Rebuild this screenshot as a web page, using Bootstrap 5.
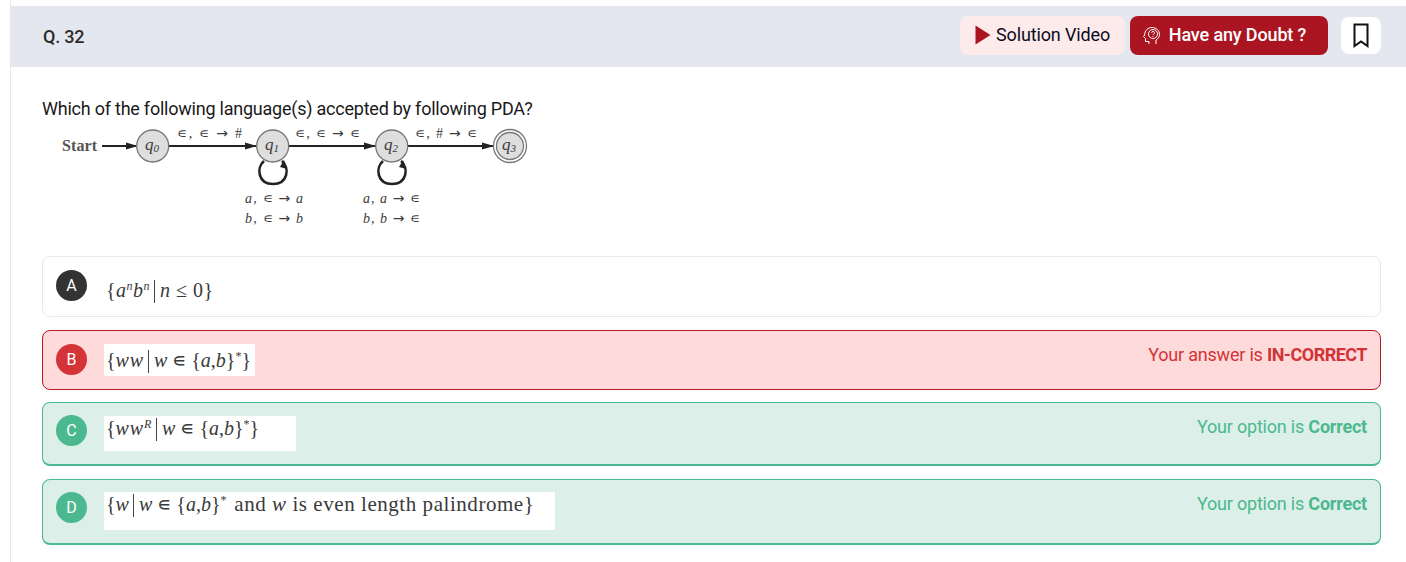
<!DOCTYPE html>
<html lang="en"><head><meta charset="utf-8">
<link href="https://cdn.jsdelivr.net/npm/bootstrap@5.3.0/dist/css/bootstrap.min.css" rel="stylesheet">
<style>
html,body{height:562px;overflow:hidden;background:#fff}
body{font-family:Roboto,"Liberation Sans",sans-serif;color:#111;font-size:16px}
.shell{margin-left:10px;padding-top:6px;border-left:1px solid #e6e8f0;height:562px}
.qbar{height:61px;background:#e4e7f0;padding:10px 25px 12px 32px}
.qno{font-weight:500;font-size:18px;letter-spacing:-.2px;color:#2b2b2b;margin-top:2px}
.btn-sol,.btn-doubt{height:39px;border-radius:8px;font-size:18px;letter-spacing:-.14px;border:0;padding:0 0 1px;line-height:1}
.btn-sol{width:165px;background:#fcebea;color:#0c0c1e;font-weight:400;gap:5px}
.btn-doubt{width:198px;margin-left:5px;padding-right:10px;background:#ab1522;color:#fff;font-weight:500;gap:8px}
.btn-mark{width:40px;height:37px;margin-left:13px;background:#fff;border-radius:8px}
.qbody{padding:31px 25px 0 31px}
.qtext{font-size:18px;letter-spacing:-.23px;line-height:22px;margin:0;color:#1a1a1a}
.pda{display:block;width:500px;height:119px;margin-bottom:17px}
.pda text{font-family:"Liberation Serif",serif;fill:#3c3c3c;font-size:17px}
.pda .lbl{font-size:14px}
.pda .it{font-style:italic}
.pda .st{font-size:16px;font-weight:700;fill:#555}
.pda .arw{font-family:"DejaVu Sans",sans-serif;font-style:normal}
.opt{border:1px solid #e9e9e9;border-radius:8px;position:relative;padding-left:13px;padding-right:13px}
.opt-a{height:61px;margin-bottom:13px;background:#fff}
.opt-b{height:60px;margin-bottom:12px;background:#ffdada;border-color:#b9172a}
.opt-c{height:64px;margin-bottom:13px}
.opt-d{height:66px}
.opt-c,.opt-d{background:#dcf0e9;border-color:#4cb88f;border-bottom-width:2px}
.mark-dot{width:31px;height:31px;border-radius:50%;color:#fff;font-size:16px;flex:none;line-height:1}
.dot-a{background:#333;margin-top:13px}
.dot-b{background:#d43338;margin-top:13px}
.dot-c,.dot-d{background:#4cb88f;margin-top:12px}
.mth{font-family:"Liberation Serif",serif;color:#3a3a3a;font-size:20px;line-height:24px;margin-left:17px;padding-left:2px;white-space:nowrap}
.mth i{font-style:italic}
.mth sup{font-size:12px;top:-.55em}
.bar{display:inline-block;width:1px;height:23px;background:#444;vertical-align:-6px;margin:0 5px 0 4px}
.set-gap{margin-left:5px}
.wide-w{letter-spacing:.8px}
.img-b{width:151px;height:32px;margin-top:13px;padding-top:4px;background:#fff}
.img-c{width:192px;height:35px;margin-top:13px;background:#fff}
.img-d{width:451px;height:38px;margin-top:12px;background:#fff}
.prose{font-size:21px;letter-spacing:.55px;margin-left:2px}
.opt-a .mth{margin-top:21px;letter-spacing:.5px}
.verdict{font-size:18px;letter-spacing:-.21px;line-height:22px;margin-left:auto;margin-top:13px;white-space:nowrap}
.verdict b{font-weight:700}
.v-bad b{letter-spacing:-.5px}
.v-bad{color:#d13438}
.v-ok{color:#4cb88f}
</style></head><body>
<div class="shell">
 <div class="qbar d-flex align-items-center">
  <div class="qno">Q. 32</div>
  <button class="btn btn-sol d-flex align-items-center justify-content-center ms-auto" type="button">
   <svg width="16" height="20" viewBox="0 0 16 20"><path d="M0.500 0.500 L15.500 10 L0.500 19.500 Z" fill="#ab1522"/></svg>Solution Video</button>
  <button class="btn btn-doubt d-flex align-items-center justify-content-center" type="button">
   <svg width="19" height="19" viewBox="0 0 19 19" fill="none" stroke="#fff" stroke-width="1"><path d="M7 18v-2.500H3.500V12.500L1.500 10.500l1.200-1.500C2.500 4.500 6 1.500 10 1.500c4 0 7.500 3 7.500 6.800 0 2.800-1.700 4.700-3.500 5.700V18"/><circle cx="11" cy="8" r="4.500"/><path d="M9.700 6.800a1.400 1.400 0 1 1 2 1.300c-.5.300-.7.600-.7 1.100M11 10.200v.7"/></svg>Have any Doubt ?</button>
  <div class="btn-mark d-flex align-items-center justify-content-center">
   <svg width="16" height="25" viewBox="0 0 16 25" fill="none" stroke="#111" stroke-width="2"><path d="M1.500 1.500h13v21.500L8 18.500 1.500 23Z"/></svg></div>
 </div>
 <div class="qbody">
  <p class="qtext">Which of the following language(s) accepted by following PDA?</p>
  <svg class="pda" viewBox="0 0 500 119">
   <g fill="none" stroke="#222" stroke-width="2">
    <path d="M60 26H95M127 26H215M247 26H334M366 26H452"/>
    <path d="M222 41C214 48 216 64 231 64C246 64 248 48 240 41" stroke-width="2.600"/>
    <path d="M341 41C333 48 335 64 350 64C365 64 367 48 359 41" stroke-width="2.600"/>
   </g>
   <g fill="#222">
    <path d="M84 22.500L96 26L84 29.500ZM203 22.500L215 26L203 29.500ZM322 22.500L334 26L322 29.500ZM440 22.500L452 26L440 29.500Z"/>
    <path d="M242 40L245 49L238 47ZM361 40L364 49L357 47Z"/>
   </g>
   <g fill="#dedede" stroke="#777" stroke-width="1.300">
    <circle cx="110.700" cy="26" r="16"/><circle cx="230.700" cy="26" r="16"/><circle cx="349.700" cy="26" r="16"/>
    <circle cx="468" cy="26" r="16.500" fill="#fff"/><circle cx="468" cy="26" r="13.500"/>
   </g>
   <text class="st" x="20" y="31" textLength="35">Start</text>
   <text class="it" x="103" y="30">q<tspan font-size="11" dy="2">0</tspan></text>
   <text class="it" x="223" y="30">q<tspan font-size="11" dy="2">1</tspan></text>
   <text class="it" x="342" y="30">q<tspan font-size="11" dy="2">2</tspan></text>
   <text class="it" x="460" y="30">q<tspan font-size="11" dy="2">3</tspan></text>
   <text class="lbl" x="135" y="18" textLength="65">∊, ∊ <tspan class="arw">→</tspan> #</text>
   <text class="lbl" x="253" y="18" textLength="65">∊, ∊ <tspan class="arw">→</tspan> ∊</text>
   <text class="lbl" x="373" y="18" textLength="62">∊, # <tspan class="arw">→</tspan> ∊</text>
   <text class="lbl it" x="203" y="83" textLength="58">a, <tspan font-style="normal">∊ </tspan><tspan class="arw">→</tspan> a</text>
   <text class="lbl it" x="203" y="103" textLength="58">b, <tspan font-style="normal">∊ </tspan><tspan class="arw">→</tspan> b</text>
   <text class="lbl it" x="321" y="83" textLength="57">a, a <tspan class="arw">→</tspan><tspan font-style="normal"> ∊</tspan></text>
   <text class="lbl it" x="321" y="103" textLength="57">b, b <tspan class="arw">→</tspan><tspan font-style="normal"> ∊</tspan></text>
  </svg>
  <div class="opt opt-a d-flex align-items-start">
   <div class="mark-dot dot-a d-flex align-items-center justify-content-center">A</div>
   <div class="mth">{<i>a<sup>n</sup>b<sup>n</sup></i><span class="bar"></span><i>n</i> ≤ 0}</div>
  </div>
  <div class="opt opt-b d-flex align-items-start">
   <div class="mark-dot dot-b d-flex align-items-center justify-content-center">B</div>
   <div class="mth img-b">{<i class="wide-w">ww</i><span class="bar"></span><i>w</i> ∊<span class="set-gap">{<i>a</i>,<i>b</i>}<sup>*</sup>}</span></div>
   <div class="verdict v-bad">Your answer is <b>IN-CORRECT</b></div>
  </div>
  <div class="opt opt-c d-flex align-items-start">
   <div class="mark-dot dot-c d-flex align-items-center justify-content-center">C</div>
   <div class="mth img-c">{<i class="wide-w">ww<sup>R</sup></i><span class="bar"></span><i>w</i> ∊<span class="set-gap">{<i>a</i>,<i>b</i>}<sup>*</sup>}</span></div>
   <div class="verdict v-ok">Your option is <b>Correct</b></div>
  </div>
  <div class="opt opt-d d-flex align-items-start">
   <div class="mark-dot dot-d d-flex align-items-center justify-content-center">D</div>
   <div class="mth img-d">{<i>w</i><span class="bar"></span><i>w</i> ∊<span class="set-gap">{<i>a</i>,<i>b</i>}<sup>*</sup></span><span class="prose"> and <i>w</i> is even length palindrome}</span></div>
   <div class="verdict v-ok">Your option is <b>Correct</b></div>
  </div>
 </div>
</div>
</body></html>
